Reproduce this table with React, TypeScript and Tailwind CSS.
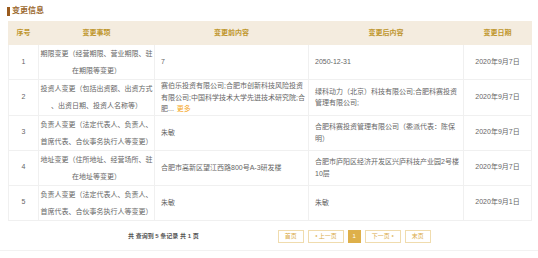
import React from "react";

type Row = {
  no: number;
  item: string[];
  before: string[];
  after: string[];
  date: string;
  more?: boolean;
};

const rows: Row[] = [
  {
    no: 1,
    item: ["期限变更（经营期限、营业期限、驻", "在期限等变更）"],
    before: ["7"],
    after: ["2050-12-31"],
    date: "2020年9月7日",
  },
  {
    no: 2,
    item: ["投资人变更（包括出资额、出资方式", "、出资日期、投资人名称等）"],
    before: ["赛伯乐投资有限公司;合肥市创新科技风险投资", "有限公司;中国科学技术大学先进技术研究院;合", "肥..."],
    after: ["绿科动力（北京）科技有限公司;合肥科赛投资", "管理有限公司;"],
    date: "2020年9月7日",
    more: true,
  },
  {
    no: 3,
    item: ["负责人变更（法定代表人、负责人、", "首席代表、合伙事务执行人等变更）"],
    before: ["朱敏"],
    after: ["合肥科赛投资管理有限公司（委派代表：陈保", "明）"],
    date: "2020年9月7日",
  },
  {
    no: 4,
    item: ["地址变更（住所地址、经营场所、驻", "在地址等变更）"],
    before: ["合肥市高新区望江西路800号A-3研发楼"],
    after: ["合肥市庐阳区经济开发区兴庐科技产业园2号楼", "10层"],
    date: "2020年9月7日",
  },
  {
    no: 5,
    item: ["负责人变更（法定代表人、负责人、", "首席代表、合伙事务执行人等变更）"],
    before: ["朱敏"],
    after: ["朱敏"],
    date: "2020年9月1日",
  },
];

const Lines = ({ lines, more }: { lines: string[]; more?: boolean }) => (
  <>
    {lines.map((l, i) => (
      <div key={i} className="whitespace-nowrap">
        {l}
        {more && i === lines.length - 1 && <span className="ml-[3px] text-[#f5a623]">更多</span>}
      </div>
    ))}
  </>
);

const PageBtn = ({ label, active }: { label: React.ReactNode; active?: boolean }) => (
  <div
    className={
      active
        ? "flex h-[13px] min-w-[13px] items-center justify-center bg-[#deb04a] px-[3px] text-[6px] text-white"
        : "flex h-[13px] items-center justify-center border border-[#f0dcae] px-[6px] text-[6px] text-[#d9aa47]"
    }
  >
    {label}
  </div>
);

export default function App() {
  return (
    <div
      className="h-[258px] w-[538px] bg-white"
      style={{ fontFamily: '"Liberation Sans", "Noto Sans CJK SC", sans-serif' }}
    >
      <div className="border-b border-[#f2f2f2] pb-[7px] pr-[7px]">
        <div className="flex h-[21px] items-center pl-[7px] pt-[1px]">
          <span className="mr-[2px] h-[9px] w-[3px] bg-[#9a5b1e]" />
          <span className="text-[8px] font-bold text-[#9c6a30]">变更信息</span>
        </div>
        <table className="ml-[8px] w-[523px] table-fixed border-collapse text-[7px] text-[#666]">
          <colgroup>
            <col className="w-[30px]" />
            <col className="w-[116px]" />
            <col className="w-[154px]" />
            <col className="w-[155px]" />
            <col className="w-[68px]" />
          </colgroup>
          <thead>
            <tr className="h-[23px] bg-[#f4ecdf] text-[7px] font-bold text-[#bf962d]">
              <th className="border border-[#f4ecdf] font-bold">序号</th>
              <th className="border border-[#f4ecdf] border-l-[#fbf7f0] font-bold">变更事项</th>
              <th className="border border-[#f4ecdf] border-l-[#fbf7f0] font-bold">变更前内容</th>
              <th className="border border-[#f4ecdf] border-l-[#fbf7f0] font-bold">变更后内容</th>
              <th className="border border-[#f4ecdf] border-l-[#fbf7f0] font-bold">变更日期</th>
            </tr>
          </thead>
          <tbody>
            {rows.map((r) => (
              <tr key={r.no}>
                <td className="border border-[#f0f0f0] text-center">{r.no}</td>
                <td className="border border-[#f0f0f0] px-0 text-center leading-[17px]">
                  <Lines lines={r.item} />
                </td>
                <td className="border border-[#f0f0f0] px-[6px] leading-[11.5px]">
                  <Lines lines={r.before} more={r.more} />
                </td>
                <td className="border border-[#f0f0f0] px-[6px] leading-[11.5px]">
                  <Lines lines={r.after} />
                </td>
                <td className="border border-[#f0f0f0] text-center">{r.date}</td>
              </tr>
            ))}
          </tbody>
        </table>
        <div className="mt-[9px] flex items-center pl-[128px]">
          <span className="text-[6px] font-bold text-[#555]">共 查询到 5 条记录 共 1 页</span>
          <div className="ml-[79px] flex items-center gap-[4px]">
            <PageBtn label="首页" />
            <PageBtn label={<><span className="mr-[2px] text-[4px]">◂</span>上一页</>} />
            <PageBtn label="1" active />
            <PageBtn label={<>下一页<span className="ml-[2px] text-[4px]">▸</span></>} />
            <PageBtn label="末页" />
          </div>
        </div>
      </div>
    </div>
  );
}
